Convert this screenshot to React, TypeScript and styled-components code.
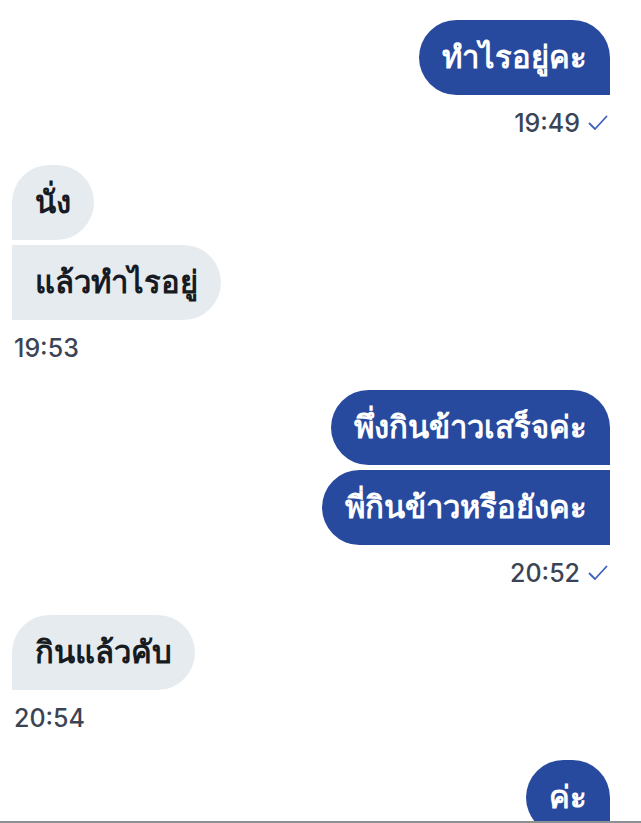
import styled, { createGlobalStyle } from 'styled-components';

const GlobalStyle = createGlobalStyle`
  html, body {
    margin: 0;
    padding: 0;
    background: #ffffff;
  }
  body {
    font-family: "Noto Sans", "Liberation Sans", sans-serif;
  }
`;

const Screen = styled.div`
  display: flex;
  flex-direction: column;
  height: 823px;
  background: #ffffff;
`;

const Thread = styled.div`
  flex: 1;
  min-height: 0;
  overflow: hidden;
  display: flex;
  flex-direction: column;
  padding: 20px 31px 0 12px;
`;

const BottomEdge = styled.div`
  height: 2px;
  background: #8b9095;
  flex-shrink: 0;
`;

const Group = styled.div<{ $mine: boolean }>`
  display: flex;
  flex-direction: column;
  align-items: ${({ $mine }) => ($mine ? 'flex-end' : 'flex-start')};
  gap: 5px;
  margin-bottom: 28px;
`;

const Bubble = styled.div<{ $mine: boolean; $first: boolean }>`
  height: 75px;
  box-sizing: border-box;
  display: flex;
  align-items: center;
  padding: 0 23px 2px;
  font-size: 31px;
  font-weight: 700;
  white-space: nowrap;
  color: ${({ $mine }) => ($mine ? '#ffffff' : '#161b22')};
  background: ${({ $mine }) => ($mine ? '#274a9e' : '#e6ebef')};
  border-radius: ${({ $mine, $first }) =>
    $mine
      ? `38px ${$first ? '38px' : '0'} 0 38px`
      : `${$first ? '38px' : '0'} 38px 38px 0`};
`;

const Meta = styled.div<{ $mine: boolean }>`
  display: flex;
  align-items: center;
  gap: 8px;
  margin-top: 9px;
  height: 28px;
  padding: ${({ $mine }) => ($mine ? '0 2px 0 0' : '0 0 0 2px')};
  font-family: Inter, "Liberation Sans", sans-serif;
  font-size: 25px;
  font-weight: 500;
  color: #3b4454;
`;

const CheckIcon = () => (
  <svg width="20" height="16" viewBox="0 0 20 16" fill="none">
    <path d="M1.5 8.5 L7 14 L18.5 1.5" stroke="#3f60bf" strokeWidth="1.8" strokeLinecap="round" strokeLinejoin="round" />
  </svg>
);

type Message = {
  mine: boolean;
  texts: string[];
  time?: string;
};

const messages: Message[] = [
  { mine: true, texts: ['ทำไรอยู่คะ'], time: '19:49' },
  { mine: false, texts: ['นั่ง', 'แล้วทำไรอยู่'], time: '19:53' },
  { mine: true, texts: ['พึ่งกินข้าวเสร็จค่ะ', 'พี่กินข้าวหรือยังคะ'], time: '20:52' },
  { mine: false, texts: ['กินแล้วคับ'], time: '20:54' },
  { mine: true, texts: ['ค่ะ'] },
];

function App() {
  return (
    <>
      <GlobalStyle />
      <Screen>
        <Thread>
          {messages.map((message, i) => (
            <Group key={i} $mine={message.mine}>
              {message.texts.map((text, j) => (
                <Bubble key={j} $mine={message.mine} $first={j === 0}>
                  {text}
                </Bubble>
              ))}
              {message.time && (
                <Meta $mine={message.mine}>
                  {message.time}
                  {message.mine && <CheckIcon />}
                </Meta>
              )}
            </Group>
          ))}
        </Thread>
        <BottomEdge />
      </Screen>
    </>
  );
}

export default App;
